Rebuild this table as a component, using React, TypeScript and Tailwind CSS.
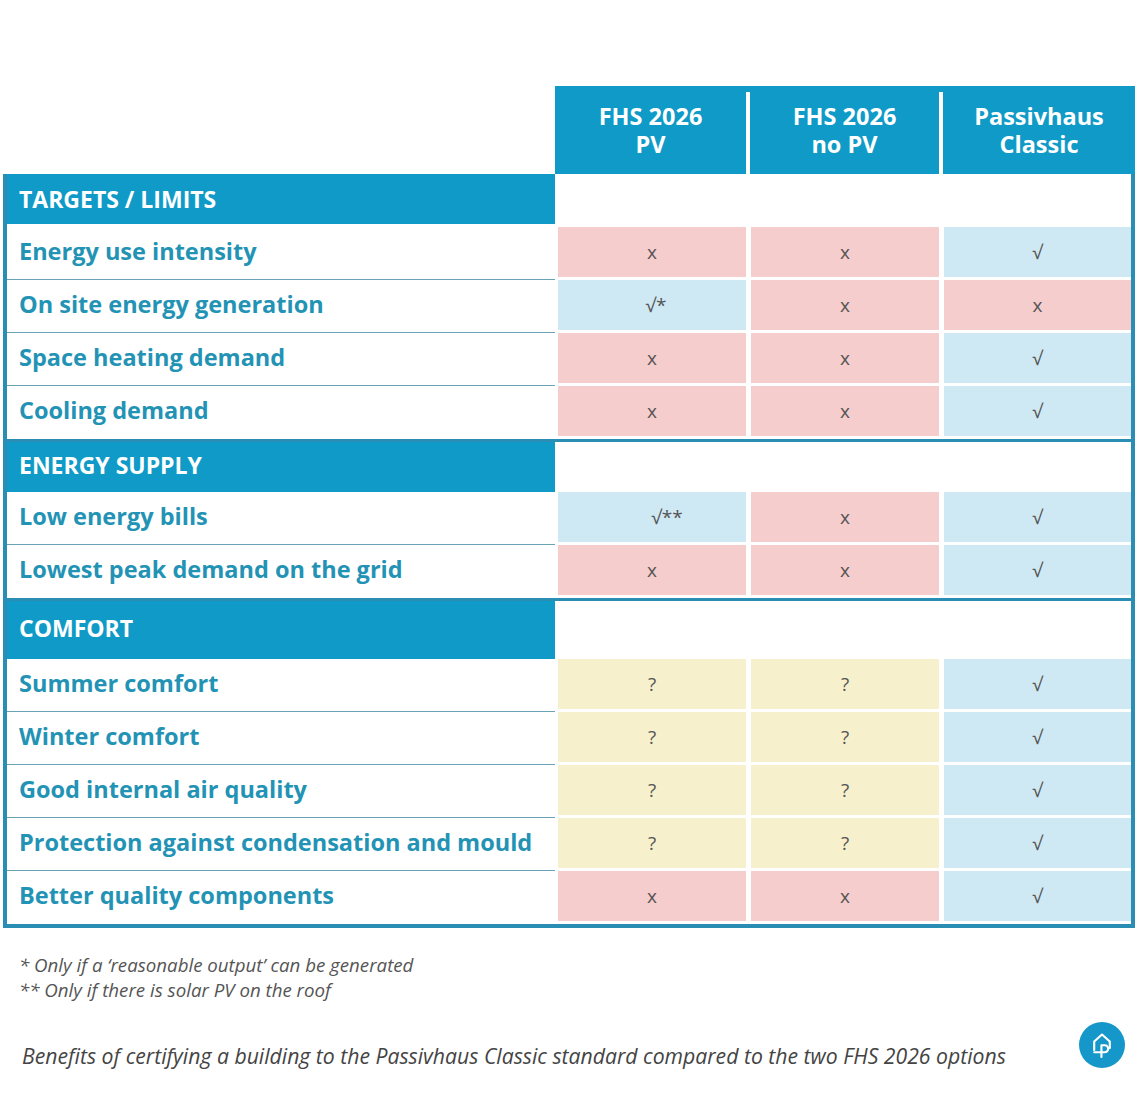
type Mark = 'x' | 'ok' | 'q' | 'ok1' | 'ok2';

type Row =
  | { kind: 'section'; title: string; tall?: boolean; first?: boolean }
  | { kind: 'item'; label: string; marks: [Mark, Mark, Mark]; last?: boolean };

const rows: Row[] = [
  { kind: 'section', title: 'TARGETS / LIMITS', first: true },
  { kind: 'item', label: 'Energy use intensity', marks: ['x', 'x', 'ok'] },
  { kind: 'item', label: 'On site energy generation', marks: ['ok1', 'x', 'x'] },
  { kind: 'item', label: 'Space heating demand', marks: ['x', 'x', 'ok'] },
  { kind: 'item', label: 'Cooling demand', marks: ['x', 'x', 'ok'], last: true },
  { kind: 'section', title: 'ENERGY SUPPLY' },
  { kind: 'item', label: 'Low energy bills', marks: ['ok2', 'x', 'ok'] },
  { kind: 'item', label: 'Lowest peak demand on the grid', marks: ['x', 'x', 'ok'], last: true },
  { kind: 'section', title: 'COMFORT', tall: true },
  { kind: 'item', label: 'Summer comfort', marks: ['q', 'q', 'ok'] },
  { kind: 'item', label: 'Winter comfort', marks: ['q', 'q', 'ok'] },
  { kind: 'item', label: 'Good internal air quality', marks: ['q', 'q', 'ok'] },
  { kind: 'item', label: 'Protection against condensation and mould', marks: ['q', 'q', 'ok'] },
  { kind: 'item', label: 'Better quality components', marks: ['x', 'x', 'ok'], last: true },
];

function MarkCell({ mark, col }: { mark: Mark; col: number }) {
  const bg =
    mark === 'x' ? 'bg-[#f6cdcd]' : mark === 'q' ? 'bg-[#f7f0cd]' : 'bg-[#cfe9f4]';
  const text =
    mark === 'x' ? 'x' : mark === 'q' ? '?' : mark === 'ok1' ? '√*' : mark === 'ok2' ? '√**' : '√';
  const pad = col === 2 ? 'pl-[3px]' : 'pl-[3px] pr-[2px]';
  return (
    <div className={`h-full pb-[3px] ${pad}`}>
      <div
        className={`flex h-full items-center justify-center text-[19px] text-[#555] ${bg} ${
          mark === 'ok2' ? 'pl-[30px]' : mark === 'ok1' ? 'pl-[8px]' : ''
        }`}
      >
        {text}
      </div>
    </div>
  );
}

function Logo() {
  return (
    <div className="flex h-[46px] w-[46px] items-center justify-center rounded-full bg-[#1697c9]">
      <svg viewBox="0 0 24 24" className="h-[34px] w-[34px]" fill="none" stroke="white" strokeWidth="1.5" strokeLinecap="round" strokeLinejoin="round" aria-hidden="true">
        <path d="M6.5 15.5V9.5L12 4.6l5.5 4.9v4.7" />
        <path d="M11.6 20.5v-8.3h2.3a2.45 2.45 0 0 1 0 4.9H6.5" />
      </svg>
    </div>
  );
}

export default function App() {
  return (
    <div className="min-h-[1103px] w-[1138px] bg-white pt-[86px] font-['Open_Sans',sans-serif]">
      {/* column heads */}
      <div className="ml-[3px] grid w-[1132px] grid-cols-[552px_580px]">
        <div />
        <div className="flex h-[88px] bg-[#0f9ac7] text-[23.5px] font-bold leading-[28px] text-white">
          <div className="flex w-[191px] items-center justify-center text-center">
            FHS 2026
            <br />
            PV
          </div>
          <div className="mt-[6px] w-[4px] bg-white" />
          <div className="flex w-[189px] items-center justify-center text-center">
            FHS 2026
            <br />
            no PV
          </div>
          <div className="mt-[6px] w-[4px] bg-white" />
          <div className="flex w-[192px] items-center justify-center text-center">
            Passivhaus
            <br />
            Classic
          </div>
        </div>
      </div>

      {/* body */}
      <div className="ml-[3px] w-[1132px] border-x-4 border-b-4 border-[#2a8db3]">
        {rows.map((row, i) =>
          row.kind === 'section' ? (
            <div
              key={i}
              className={`grid grid-cols-[548px_193px_193px_190px] ${
                row.tall ? 'h-[61px]' : 'h-[53px]'
              } ${row.first ? '' : 'border-t-[3px] border-[#2a8db3]'}`}
            >
              <div
                className={`flex items-center bg-[#0f9ac7] pl-[12px] text-[23px] font-bold text-white ${
                  row.first ? 'mb-[3px]' : 'pb-[4px]'
                }`}
              >
                {row.title}
              </div>
              <div />
              <div />
              <div />
            </div>
          ) : (
            <div key={i} className="grid h-[53px] grid-cols-[548px_193px_193px_190px]">
              <div
                className={`flex items-center pl-[12px] pb-[3px] text-[23.5px] font-bold text-[#2393b5] ${
                  row.last ? '' : 'border-b border-[#6aa3b8]'
                }`}
              >
                {row.label}
              </div>
              {row.marks.map((m, j) => (
                <MarkCell key={j} mark={m} col={j} />
              ))}
            </div>
          ),
        )}
      </div>

      {/* notes */}
      <div className="mt-[24px] pl-[19px] text-[18.7px] italic leading-[25px] text-[#555]">
        <p>* Only if a ‘reasonable output’ can be generated</p>
        <p>** Only if there is solar PV on the roof</p>
      </div>

      <div className="mt-[20px] flex items-start justify-between pl-[22px] pr-[13px]">
        <p className="pt-[20px] text-[21.2px] italic leading-[28px] text-[#444]">
          Benefits of certifying a building to the Passivhaus Classic standard compared to the two FHS 2026 options
        </p>
        <Logo />
      </div>
    </div>
  );
}
